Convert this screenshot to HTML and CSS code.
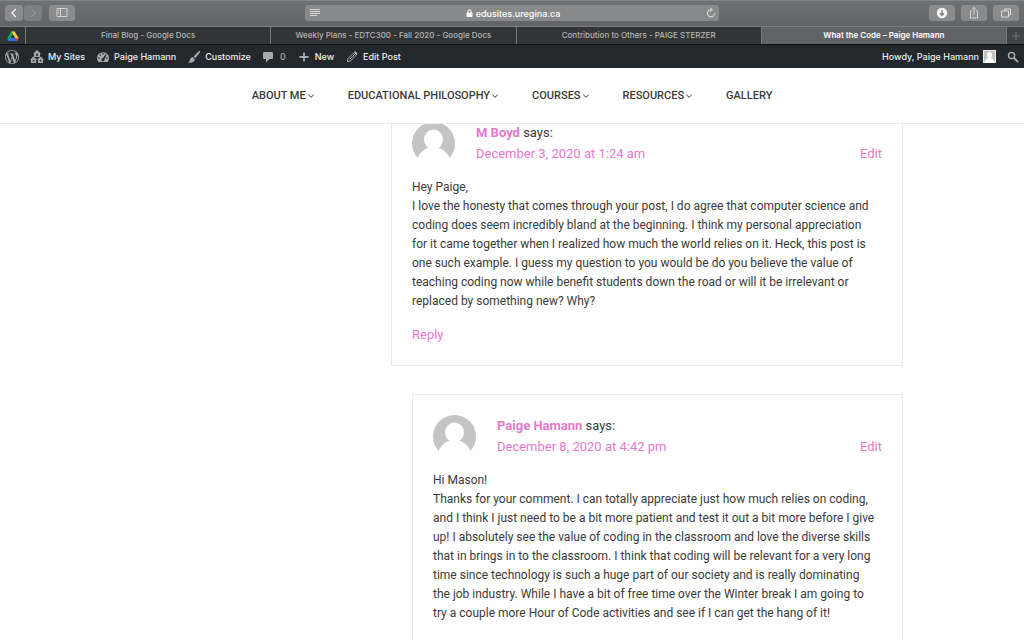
FILE: index.html
```
<!DOCTYPE html>
<html lang="en">
<head>
  <meta charset="UTF-8" />
  <meta name="viewport" content="width=device-width, initial-scale=1.0"/>
  <title>What the Code – Paige Hamann</title>
  <link rel="stylesheet" href="styles.css">
</head>
<body>
  <div class="toolbar">
    <div class="toolbar-left">
      <div class="history">
        <button type="button" aria-label="Back"><svg width="16" height="16" viewBox="0 0 16 16"><path d="M9.800 4 6 8l3.800 4" stroke="#f4f4f4" stroke-width="1.300"/></svg></button>
        <button type="button" aria-label="Forward" class="dim"><svg width="16" height="16" viewBox="0 0 16 16"><path d="m6.500 4 3.800 4-3.800 4" stroke="#a5a6a8"/></svg></button>
      </div>
      <button type="button" aria-label="Sidebar"><svg width="16" height="16" viewBox="0 0 16 16"><path d="M3 3.500h10v8H3zM6.500 3.500v8M4.300 5.500h1M4.300 7.500h1" stroke="#dcdcdd" stroke-width=".9"/></svg></button>
    </div>
    <div class="address">
      <svg width="12" height="10" viewBox="0 0 12 10"><path d="M1 1.500h10M1 3.500h10M1 5.500h10M1 7.500h7" stroke="#e2e2e3" stroke-width=".9"/></svg>
      <a class="url" href="#"><svg width="7" height="8" viewBox="0 0 7 8"><path d="M2 4V2.300a1.500 1.500 0 0 1 3 0V4" stroke="#fff"/><rect x=".5" y="3.500" width="6" height="4.500" rx=".7" fill="#fff"/></svg>edusites.uregina.ca</a>
      <button type="button" class="reload" aria-label="Reload"><svg width="12" height="12" viewBox="0 0 12 12"><path d="M6.300 2.700A3.600 3.600 0 1 0 9.600 6.300M5.300.7l2 2-2 2" stroke="#e8e8e8"/></svg></button>
    </div>
    <div class="toolbar-right">
      <button type="button" aria-label="Downloads"><svg width="16" height="16" viewBox="0 0 16 16"><circle cx="8" cy="8" r="5.200" fill="#f5f5f5"/><path d="M8 5v5M6 8.300l2 2 2-2" stroke="#77787a" stroke-width="1.300"/></svg></button>
      <button type="button" aria-label="Share"><svg width="16" height="16" viewBox="0 0 16 16"><path d="M6 6H4.500v7h7V6H10M8 10V2.500M6 4.500l2-2 2 2" stroke="#dcdcdd" stroke-width=".9"/></svg></button>
      <button type="button" aria-label="Show tabs"><svg width="16" height="16" viewBox="0 0 16 16"><path d="M6.500 6V4h6v6h-2M3.500 6h7v6h-7z" stroke="#e4e4e5" stroke-width=".9"/></svg></button>
    </div>
  </div>

  <div class="tabs">
    <a href="#" class="tab pinned" aria-label="Google Drive">
      <svg width="14" height="14" viewBox="0 0 14 14"><path d="M5 2.500h3.500L4.300 9.500 2.500 12 1.300 9.600z" fill="#0da960"/><path d="M5.500 2.500h3.200l4 7H9.300z" fill="#ffcf3e"/><path d="M3.800 9h9L11 12H2.300z" fill="#2d6ff7"/><path d="m9.800 9h3L11.200 12z" fill="#ea4335"/><path d="m7 5.700 1.900 3.300H5.100z" fill="#333436"/></svg>
    </a>
    <a href="#" class="tab">Final Blog - Google Docs</a>
    <a href="#" class="tab">Weekly Plans - EDTC300 - Fall 2020 - Google Docs</a>
    <a href="#" class="tab">Contribution to Others - PAIGE STERZER</a>
    <a href="#" class="tab active">What the Code – Paige Hamann</a>
    <button type="button" class="new-tab" aria-label="New tab"><svg width="10" height="10" viewBox="0 0 10 10"><path d="M5 1v8M1 5h8" stroke="#747577"/></svg></button>
  </div>

  <div class="admin-bar">
    <a href="#" aria-label="WordPress"><svg width="14" height="14" viewBox="0 0 20 20"><path fill="#a7aaad" d="M20 10c0-5.510-4.490-10-10-10C4.480 0 0 4.490 0 10c0 5.520 4.480 10 10 10 5.510 0 10-4.480 10-10zM7.780 15.370 4.370 6.220c.55-.02 1.170-.08 1.170-.08.5-.06.44-1.130-.06-1.110 0 0-1.450.11-2.370.11-.18 0-.37 0-.58-.01C4.120 2.690 6.870 1.110 10 1.110c2.330 0 4.450.87 6.050 2.340-.68-.11-1.650.39-1.650 1.580 0 .74.45 1.360.9 2.100.35.61.55 1.360.55 2.460 0 1.490-1.400 5-1.400 5l-3.030-8.370c.54-.02.82-.17.82-.17.5-.05.44-1.250-.06-1.220 0 0-1.440.12-2.380.12-.87 0-2.330-.12-2.330-.12-.5-.03-.56 1.200-.06 1.220l.92.080 1.260 3.410zM17.410 10c.24-.64.74-1.870.43-4.250.7 1.290 1.050 2.710 1.050 4.250 0 3.290-1.730 6.240-4.400 7.780.97-2.590 1.940-5.200 2.920-7.780zM6.100 18.090C3.120 16.650 1.110 13.530 1.110 10c0-1.300.23-2.480.72-3.590C3.250 10.300 4.670 14.200 6.100 18.090zm4.030-6.630 2.580 6.980c-.86.29-1.760.45-2.710.45-.79 0-1.570-.11-2.290-.33.81-2.380 1.620-4.740 2.420-7.100z"/></svg></a>
    <a href="#"><svg width="14" height="14" viewBox="0 0 14 14"><path fill="#a7aaad" fill-rule="evenodd" d="m7 0 3.700 3.500-.8.8V7H4.100V4.300l-.8-.8zM6.200 3.500V6h1.600V3.500zM3.500 6.500l3.200 3-.6.700V13H1v-2.800l-.7-.7zM2.800 9.800v1.700h1.500V9.800zM10.500 6.500l3.200 3-.7.700V13H8v-2.800l-.7-.7zM9.800 9.800v1.700h1.500V9.800z"/></svg>My Sites</a>
    <a href="#"><svg width="14" height="14" viewBox="0 0 14 14"><path d="M2.400 12A6 6 0 1 1 11.600 12z" fill="#a7aaad"/><g fill="#23282d"><circle cx="3" cy="8" r=".8"/><circle cx="4.300" cy="5" r=".8"/><circle cx="7" cy="3.800" r=".8"/><circle cx="11" cy="8" r=".8"/><path d="m9.800 4 .8.700-2.200 4.700a1.500 1.500 0 1 1-1.600-1.200z"/></g></svg>Paige Hamann</a>
    <a href="#"><svg width="14" height="14" viewBox="0 0 14 14"><path d="M12.800 1c.5.500.4 1 0 1.600L8.300 8.300 6.500 6.600 11.500 1.400c.5-.5.900-.7 1.300-.4zM5.900 7.200l1.800 1.700c.2 2.800-2.700 4.400-6.700 3.600 1.800-.5 1.600-2 2.300-3.700.5-1.200 1.600-1.800 2.600-1.600z" fill="#a7aaad"/></svg>Customize</a>
    <a href="#" class="count"><svg width="12" height="14" viewBox="0 0 12 14"><path d="M2 2h8q1 0 1 1v5q0 1-1 1H7.500L4 12.500V9H2Q1 9 1 8V3q0-1 1-1z" fill="#a7aaad"/></svg>0</a>
    <a href="#"><svg width="14" height="14" viewBox="0 0 14 14"><path d="M7 2.500v9M2.500 7h9" stroke="#a7aaad" stroke-width="1.800"/></svg>New</a>
    <a href="#"><svg width="14" height="14" viewBox="0 0 14 14"><path d="m8.300 3.200 2.500 2.500-5.300 5.200-3.100.8.700-3.200zM4.800 9.200l4.700-4.700" stroke="#a7aaad"/><path d="m8.700 2.500 1-1q.5-.4 1 0l1.700 1.700q.4.500 0 1l-1 1z" fill="#a7aaad"/></svg>Edit Post</a>
    <a href="#" class="howdy">Howdy, Paige Hamann<svg width="13" height="13" viewBox="0 0 13 13"><path d="M0 0h13v13H0z" fill="#c3c3c3"/><path d="M.5.5h12v12H.5z" stroke="#ededed"/><ellipse cx="6.500" cy="5" rx="2.500" ry="3" fill="#fff"/><path d="M1.500 13q.5-4 3.500-5h3q3 1 3.500 5z" fill="#fff"/></svg></a>
    <button type="button" aria-label="Search"><svg width="12" height="12" viewBox="0 0 12 12"><circle cx="4.600" cy="4.600" r="3.100" stroke="#a7aaad" stroke-width="1.400"/><path d="m7 7 4 4" stroke="#a7aaad" stroke-width="1.900"/></svg></button>
  </div>

  <header>
    <nav>
      <a href="#">ABOUT ME<svg width="8" height="6" viewBox="0 0 8 6"><path d="m1.300 1.700 2.700 2.600 2.700-2.600"/></svg></a>
      <a href="#">EDUCATIONAL PHILOSOPHY<svg width="8" height="6" viewBox="0 0 8 6"><path d="m1.300 1.700 2.700 2.600 2.700-2.600"/></svg></a>
      <a href="#">COURSES<svg width="8" height="6" viewBox="0 0 8 6"><path d="m1.300 1.700 2.700 2.600 2.700-2.600"/></svg></a>
      <a href="#">RESOURCES<svg width="8" height="6" viewBox="0 0 8 6"><path d="m1.300 1.700 2.700 2.600 2.700-2.600"/></svg></a>
      <a href="#">GALLERY</a>
    </nav>
  </header>

  <main>
    <div class="container">
      <ol class="comments">
        <li>
          <article class="comment">
            <div class="comment-head">
              <svg class="avatar" viewBox="0 0 43 43"><circle cx="21.500" cy="21.500" r="21.500" fill="#c4c4c4"/><g fill="#fff"><ellipse cx="21.500" cy="17.500" rx="9.500" ry="10"/><ellipse cx="21.500" cy="42" rx="17" ry="17"/></g></svg>
              <div class="meta">
                <div><a href="#" class="author">M Boyd</a> says:</div>
                <div class="date"><a href="#">December 3, 2020 at 1:24 am</a><a href="#">Edit</a></div>
              </div>
            </div>
            <p>Hey Paige,<br>
            I love the honesty that comes through your post, I do agree that computer science and<br>
            coding does seem incredibly bland at the beginning. I think my personal appreciation<br>
            for it came together when I realized how much the world relies on it. Heck, this post is<br>
            one such example. I guess my question to you would be do you believe the value of<br>
            teaching coding now while benefit students down the road or will it be irrelevant or<br>
            replaced by something new? Why?</p>
            <a href="#" class="reply">Reply</a>
          </article>
          <ol class="children">
            <li>
              <article class="comment">
                <div class="comment-head">
                  <svg class="avatar" viewBox="0 0 43 43"><circle cx="21.500" cy="21.500" r="21.500" fill="#c4c4c4"/><g fill="#fff"><ellipse cx="21.500" cy="17.500" rx="9.500" ry="10"/><ellipse cx="21.500" cy="42" rx="17" ry="17"/></g></svg>
                  <div class="meta">
                    <div><a href="#" class="author">Paige Hamann</a> says:</div>
                    <div class="date"><a href="#">December 8, 2020 at 4:42 pm</a><a href="#">Edit</a></div>
                  </div>
                </div>
                <p>Hi Mason!<br>
                Thanks for your comment. I can totally appreciate just how much relies on coding,<br>
                and I think I just need to be a bit more patient and test it out a bit more before I give<br>
                up! I absolutely see the value of coding in the classroom and love the diverse skills<br>
                that in brings in to the classroom. I think that coding will be relevant for a very long<br>
                time since technology is such a huge part of our society and is really dominating<br>
                the job industry. While I have a bit of free time over the Winter break I am going to<br>
                try a couple more Hour of Code activities and see if I can get the hang of it!</p>
              </article>
            </li>
          </ol>
        </li>
      </ol>
    </div>
  </main>
</body>
</html>
```

FILE: styles.css
```
:root {
  --pink: #e778cb;
  --text-color: #3a3a3a;
  --line: #eaeaea;
  --ui-font: Inter, 'Liberation Sans', sans-serif;
}

* {
  box-sizing: border-box;
}

body {
  margin: 0;
  height: 100vh;
  display: flex;
  flex-direction: column;
  overflow: hidden;
  font-family: Roboto, sans-serif;
  font-size: 13px;
  line-height: 19px;
  color: var(--text-color);
  background-color: #fff;
}

a {
  color: inherit;
  text-decoration: none;
}

button {
  border: none;
  padding: 0;
  background: none;
  display: flex;
  align-items: center;
  justify-content: center;
  cursor: pointer;
}

svg {
  fill: none;
  flex-shrink: 0;
}

/* browser toolbar */
.toolbar {
  flex-shrink: 0;
  display: grid;
  grid-template-columns: 1fr 414px 1fr;
  align-items: center;
  height: 27px;
  padding: 0 5px 1px;
  background: linear-gradient(#6f7073, #636467);
  border-top: 1px solid #858688;
  border-bottom: 1px solid #7b7c7e;
  font-family: var(--ui-font);
}

.toolbar-left,
.toolbar-right,
.history {
  display: flex;
}

.toolbar-left {
  gap: 7px;
}

.toolbar-right {
  justify-content: flex-end;
  gap: 6px;
}

.history {
  gap: 1px;
}

.toolbar button {
  width: 26px;
  height: 16px;
  border-radius: 3px;
  background-color: #8a8b8d;
}

.toolbar .history button {
  width: 18px;
}

.toolbar .history .dim {
  background-color: #7e7f81;
}

.address {
  display: flex;
  align-items: center;
  justify-content: space-between;
  height: 16px;
  padding: 0 2px 0 4px;
  border-radius: 3px;
  background-color: #88898b;
}

.url {
  display: flex;
  align-items: center;
  gap: 3px;
  color: white;
  font-size: 9px;
  font-weight: 500;
}

.toolbar .reload {
  width: 12px;
  background: none;
}

/* tabs */
.tabs {
  flex-shrink: 0;
  display: flex;
  height: 18px;
  background-color: #333436;
  border-bottom: 1px solid #0c0c0d;
  font-family: var(--ui-font);
  font-size: 8px;
  font-weight: 500;
  color: #b5b6b7;
}

.tab {
  flex: 1;
  display: flex;
  align-items: center;
  justify-content: center;
  border-right: 1px solid #77787a;
  white-space: nowrap;
}

.pinned {
  flex: 0 0 26px;
}

.active {
  background-color: #626366;
  color: white;
  font-weight: 600;
}

.new-tab {
  width: 17px;
  background-color: #414245;
}

/* admin bar */
.admin-bar {
  flex-shrink: 0;
  display: flex;
  align-items: center;
  gap: 11px;
  height: 23px;
  padding: 0 5px;
  background-color: #23282d;
  font-family: var(--ui-font);
  font-size: 9px;
  font-weight: 500;
  color: #eeeeee;
}

.admin-bar a {
  display: flex;
  align-items: center;
  gap: 4px;
}

.admin-bar .count {
  gap: 6px;
  color: #a7aaad;
}

.admin-bar .howdy {
  margin-left: auto;
}

/* site menu */
header {
  flex-shrink: 0;
  background-color: white;
  border-bottom: 1px solid var(--line);
}

nav {
  display: flex;
  justify-content: center;
  gap: 33px;
  padding: 18px 0;
  font-size: 11px;
  font-weight: 500;
}

nav a {
  display: flex;
  align-items: center;
  gap: 1px;
}

nav svg {
  stroke: #3a3a3a;
}

/* comments */
main {
  flex: 1;
  min-height: 0;
  overflow: hidden;
}

.container {
  max-width: 782px;
  margin: auto;
}

ol {
  list-style: none;
  margin: 0;
  padding: 0;
}

/* list is scrolled part way under the menu */
.comments {
  max-width: 512px;
  margin-top: -23px;
  margin-left: auto;
}

.children {
  margin-left: 21px;
}

.comment {
  padding: 20px;
  margin-bottom: 28px;
  border: 1px solid var(--line);
}

.comment-head {
  display: flex;
  gap: 21px;
  line-height: 21px;
}

.avatar {
  width: 43px;
  height: 43px;
}

.meta {
  flex: 1;
}

.author {
  color: var(--pink);
  font-weight: bold;
}

.date {
  display: flex;
  justify-content: space-between;
  color: var(--pink);
}

.comment p {
  margin: 13px 0;
  font-size: 12px;
}

.reply {
  display: block;
  line-height: 21px;
  color: var(--pink);
}
```
